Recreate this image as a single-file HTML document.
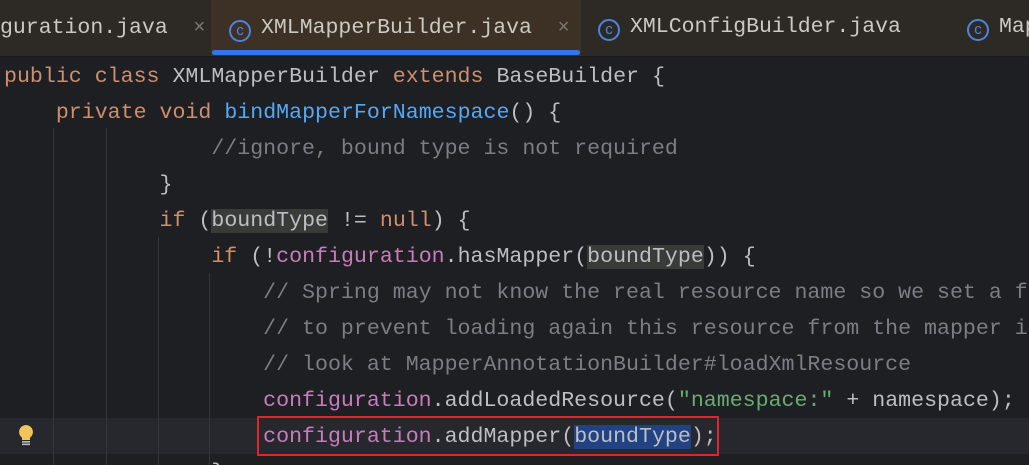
<!DOCTYPE html>
<html style="overflow:hidden;width:1029px;height:465px"><head><style>
body{margin:0;width:1029px;height:465px;overflow:hidden;background:#1e1f22;font-family:"Liberation Mono",monospace}
#w{position:relative;width:1029px;height:465px;overflow:hidden}
.tabs{position:absolute;left:0;top:0;width:1029px;height:56px;background:#2d2a25;border-bottom:1px solid #1a1a1a;overflow:hidden}
.tab{position:absolute;top:0;height:56px;line-height:55px;font-size:21.5px;color:#cbc9c3;white-space:pre}
.act{background:#3c3124;}
.ul{position:absolute;left:212px;top:50px;width:368px;height:5px;background:#3574f0;border-radius:3px}
.ic{display:inline-block;width:18px;height:18px;border:2px solid #4d83dd;border-radius:50%;color:#4d83dd;font-size:15px;line-height:18px;text-align:center;vertical-align:-2px;margin-right:10px;font-family:"Liberation Sans",sans-serif}
.x{color:#7a7872;font-family:"Liberation Sans",sans-serif;font-size:20px}
.ln{position:absolute;left:4px;right:0;height:36px;line-height:36px;font-size:21.6px;color:#bcbec4;white-space:pre;overflow:hidden}
.k{color:#cf8e6d}.f{color:#56a8f5}.c{color:#7a7e85}.p{color:#c77dbb}.s{color:#6aab73}
.g{position:absolute;width:1px;background:#35363a}
</style></head><body><div id="w">
<div class="tabs">
<div class="tab" style="left:0">guration.java  <span class="x">×</span></div>
<div class="tab act" style="left:211px;width:370px;padding-left:18px;box-sizing:border-box"><span class="ic">c</span>XMLMapperBuilder.java  <span class="x">×</span></div>
<div class="ul"></div>
<div class="tab" style="left:598px"><span class="ic">c</span>XMLConfigBuilder.java</div>
<div class="tab" style="left:967px;right:0;overflow:hidden"><span class="ic">c</span>Mapper</div>
</div>
<div style="position:absolute;left:0;top:418px;width:1029px;height:36px;background:#26282e"></div>
<div class="g" style="left:53px;top:128px;height:337px"></div>
<div class="g" style="left:106px;top:128px;height:337px"></div>
<div class="g" style="left:158px;top:237px;height:228px"></div>
<div class="g" style="left:209px;top:273px;height:192px"></div>
<div class="ln" style="top:59px"><span class="k">public class </span>XMLMapperBuilder <span class="k">extends </span>BaseBuilder {</div>
<div class="ln" style="top:95px">    <span class="k">private void </span><span class="f">bindMapperForNamespace</span>() {</div>
<div class="ln" style="top:131px">                <span class="c">//ignore, bound type is not required</span></div>
<div class="ln" style="top:167px">            }</div>
<div class="ln" style="top:203px">            <span class="k">if </span>(<span style="background:#393b38">boundType</span> != <span class="k">null</span>) {</div>
<div class="ln" style="top:239px">                <span class="k">if </span>(!<span class="p">configuration</span>.hasMapper(<span style="background:#393b38">boundType</span>)) {</div>
<div class="ln" style="top:275px">                    <span class="c">// Spring may not know the real resource name so we set a flag</span></div>
<div class="ln" style="top:311px">                    <span class="c">// to prevent loading again this resource from the mapper interface</span></div>
<div class="ln" style="top:347px">                    <span class="c">// look at MapperAnnotationBuilder#loadXmlResource</span></div>
<div class="ln" style="top:383px">                    <span class="p">configuration</span>.addLoadedResource(<span class="s">"namespace:"</span> + namespace);</div>
<div class="ln" style="top:419px">                    <span class="p">configuration</span>.addMapper(<span style="background:#214283">boundType</span>);</div>
<div class="ln" style="top:455px;height:10px">                }</div>
<div style="position:absolute;left:257px;top:416px;width:462px;height:40px;border:2px solid #e0262b;box-sizing:border-box"></div>
<svg style="position:absolute;left:16px;top:424px" width="20" height="24" viewBox="0 0 20 24"><path d="M10 1a7 7 0 0 0-4 12.7V16h8v-2.3A7 7 0 0 0 10 1z" fill="#f2c55c"/><rect x="6" y="17" width="8" height="1.6" fill="#bbb"/><rect x="6" y="19.5" width="8" height="1.6" fill="#bbb"/></svg>
</div></body></html>
